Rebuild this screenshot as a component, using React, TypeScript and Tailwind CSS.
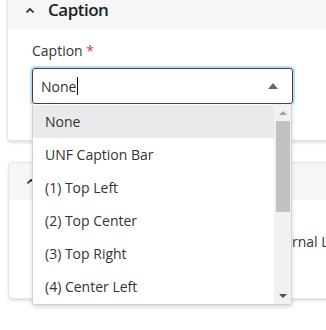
import React from 'react';

const options = ['None', 'UNF Caption Bar', '(1) Top Left', '(2) Top Center', '(3) Top Right', '(4) Center Left'];

const Chevron: React.FC = () => (
  <svg width="10" height="7" viewBox="0 0 10 7" className="shrink-0">
    <path d="M1.5 5.5 L5 2 L8.5 5.5" fill="none" stroke="#222" strokeWidth="1.6" />
  </svg>
);

const App: React.FC = () => {
  return (
    <div
      className="relative w-[326px] h-[330px] overflow-hidden bg-white text-[#333]"
      style={{ fontFamily: '"Open Sans", "Noto Sans", sans-serif' }}
    >
      {/* caption card */}
      <div className="-mt-[10px] ml-[7px] w-[340px] rounded-[4px] border border-[#e3e5e8] bg-white shadow-[0_2px_3px_rgba(0,0,0,0.12)]">
        <div className="flex h-[38px] items-center gap-[13px] rounded-t-[4px] bg-[#f5f6f8] pl-[17px]">
          <Chevron />
          <span className="text-[17px] font-semibold tracking-[-0.5px] text-[#222]">Caption</span>
        </div>
        <div className="pl-[24px] pt-[12px] pb-[36px]">
          <div className="h-[20px] text-[14px] leading-[20px] text-[#333]">
            Caption <span className="text-[#d9363e]">*</span>
          </div>
          <div className="mt-[7px] flex h-[36px] w-[261px] items-center justify-between rounded-[3px] border border-[#3d424a] pl-[8px] pr-[14px] ring-2 ring-[#b9dcf7]">
            <span className="flex items-center text-[14px] text-[#333]">
              None<span className="ml-[1px] inline-block h-[18px] w-px bg-[#111]" />
            </span>
            <svg width="10" height="6" viewBox="0 0 10 6">
              <path d="M0 6 L5 0 L10 6 Z" fill="#666" />
            </svg>
          </div>
        </div>
      </div>

      {/* second card */}
      <div className="mt-[21px] ml-[8px] h-[137px] w-[340px] rounded-[4px] border border-[#e3e5e8] bg-white shadow-[0_2px_3px_rgba(0,0,0,0.12)]">
        <div className="flex h-[37px] items-center rounded-t-[4px] bg-[#f5f6f8] pl-[17px]">
          <Chevron />
        </div>
        <div className="pt-[31px] pl-[255px] whitespace-nowrap text-[14px] text-[#333]">External Link</div>
      </div>

      {/* dropdown list */}
      <div className="absolute left-[32px] top-[104px] flex h-[201px] w-[260px] rounded-b-[3px] border border-t-0 border-[#cfd2d6] bg-white shadow-[0_2px_4px_rgba(0,0,0,0.15)]">
        <div className="flex-1 pt-[1px]">
          {options.map((o, i) => (
            <div
              key={o}
              className={`flex h-[33px] items-center pl-[12px] text-[14px] text-[#333] ${i === 0 ? 'bg-[#e9eaec]' : ''}`}
            >
              {o}
            </div>
          ))}
        </div>
        <div className="flex w-[17px] flex-col items-center bg-[#f1f1f1]">
          <div className="flex h-[17px] items-center justify-center">
            <svg width="8" height="4" viewBox="0 0 8 4">
              <path d="M0 4 L4 0 L8 4 Z" fill="#a3a3a3" />
            </svg>
          </div>
          <div className="h-[91px] w-[14px] bg-[#c1c1c1]" />
          <div className="flex-1" />
          <div className="flex h-[17px] items-center justify-center">
            <svg width="8" height="4" viewBox="0 0 8 4">
              <path d="M0 0 L8 0 L4 4 Z" fill="#505050" />
            </svg>
          </div>
        </div>
      </div>
    </div>
  );
};

export default App;
